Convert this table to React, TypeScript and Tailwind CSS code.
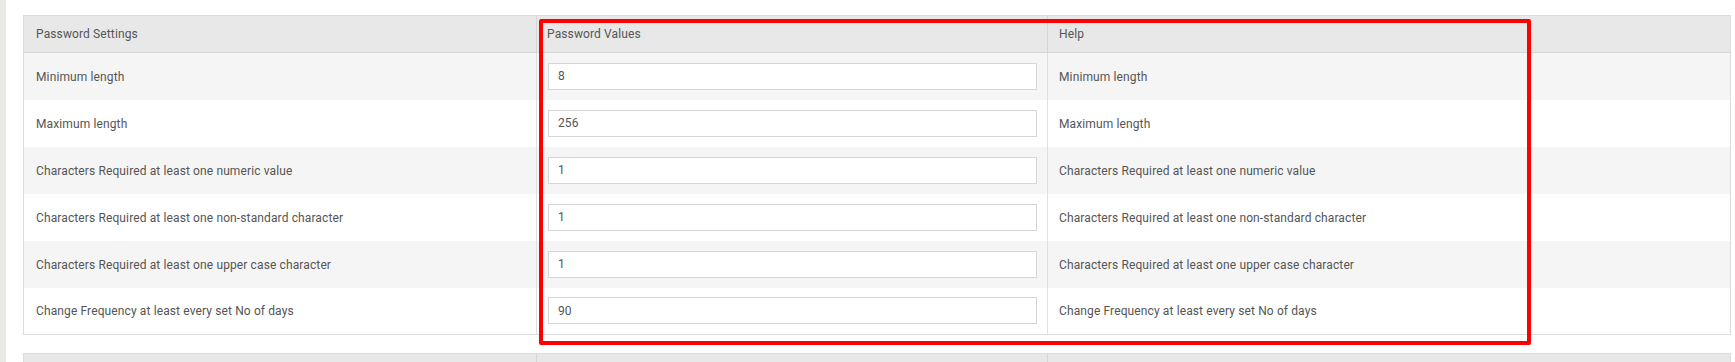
import { useState } from "react";

const rows = [
  { label: "Minimum length", value: "8" },
  { label: "Maximum length", value: "256" },
  { label: "Characters Required at least one numeric value", value: "1" },
  { label: "Characters Required at least one non-standard character", value: "1" },
  { label: "Characters Required at least one upper case character", value: "1" },
  { label: "Change Frequency at least every set No of days", value: "90" },
];

function Colgroup() {
  return (
    <colgroup>
      <col className="w-[513px]" />
      <col className="w-[511px]" />
      <col />
    </colgroup>
  );
}

export default function App() {
  const [values, setValues] = useState(rows.map((r) => r.value));

  return (
    <div className="flex h-[362px] w-full overflow-hidden bg-white font-['Roboto',sans-serif] text-[12px] tracking-[0.12px] text-[#555]">
      <div className="w-[6px] shrink-0 bg-[#ebe9e6]" />
      <div className="relative flex-1 pl-[17px] pr-[4px] pt-[15px]">
        <table className="w-full table-fixed border-collapse border border-[#dcdcdc]">
          <Colgroup />
          <thead>
            <tr className="h-[37px] bg-[#e8e8e8]">
              <th className="border-b border-r border-[#d6d6d6] px-[12px] text-left font-normal">Password Settings</th>
              <th className="border-b border-r border-[#d6d6d6] px-[10px] text-left font-normal">Password Values</th>
              <th className="border-b border-[#d6d6d6] px-[11px] text-left font-normal">Help</th>
            </tr>
          </thead>
          <tbody>
            {rows.map((row, i) => (
              <tr key={row.label} className={i % 2 === 0 ? "h-[47px] bg-[#f5f5f5]" : "h-[47px] bg-white"}>
                <td className="border-r border-[#e0e0e0] px-[12px] pt-[1px]">{row.label}</td>
                <td className="border-r border-[#e0e0e0] pl-[11px] pr-[10px]">
                  <input
                    type="text"
                    value={values[i]}
                    onChange={(e) => {
                      const next = [...values];
                      next[i] = e.target.value;
                      setValues(next);
                    }}
                    className="block h-[27px] w-full border border-[#d6d6d6] bg-white px-[9px] text-[12px] text-[#555] outline-none"
                  />
                </td>
                <td className="px-[11px] pt-[1px]">{row.label}</td>
              </tr>
            ))}
          </tbody>
        </table>

        <table className="mt-[18px] w-full table-fixed border-collapse border border-[#dcdcdc]">
          <Colgroup />
          <thead>
            <tr className="h-[37px] bg-[#e8e8e8]">
              <th className="border-r border-[#d6d6d6]" />
              <th className="border-r border-[#d6d6d6]" />
              <th />
            </tr>
          </thead>
        </table>

        {/* annotation box */}
        <div className="pointer-events-none absolute left-[533px] top-[19px] h-[326px] w-[992px] rounded-[2px] border-4 border-[#ff0000]" />
      </div>
    </div>
  );
}
